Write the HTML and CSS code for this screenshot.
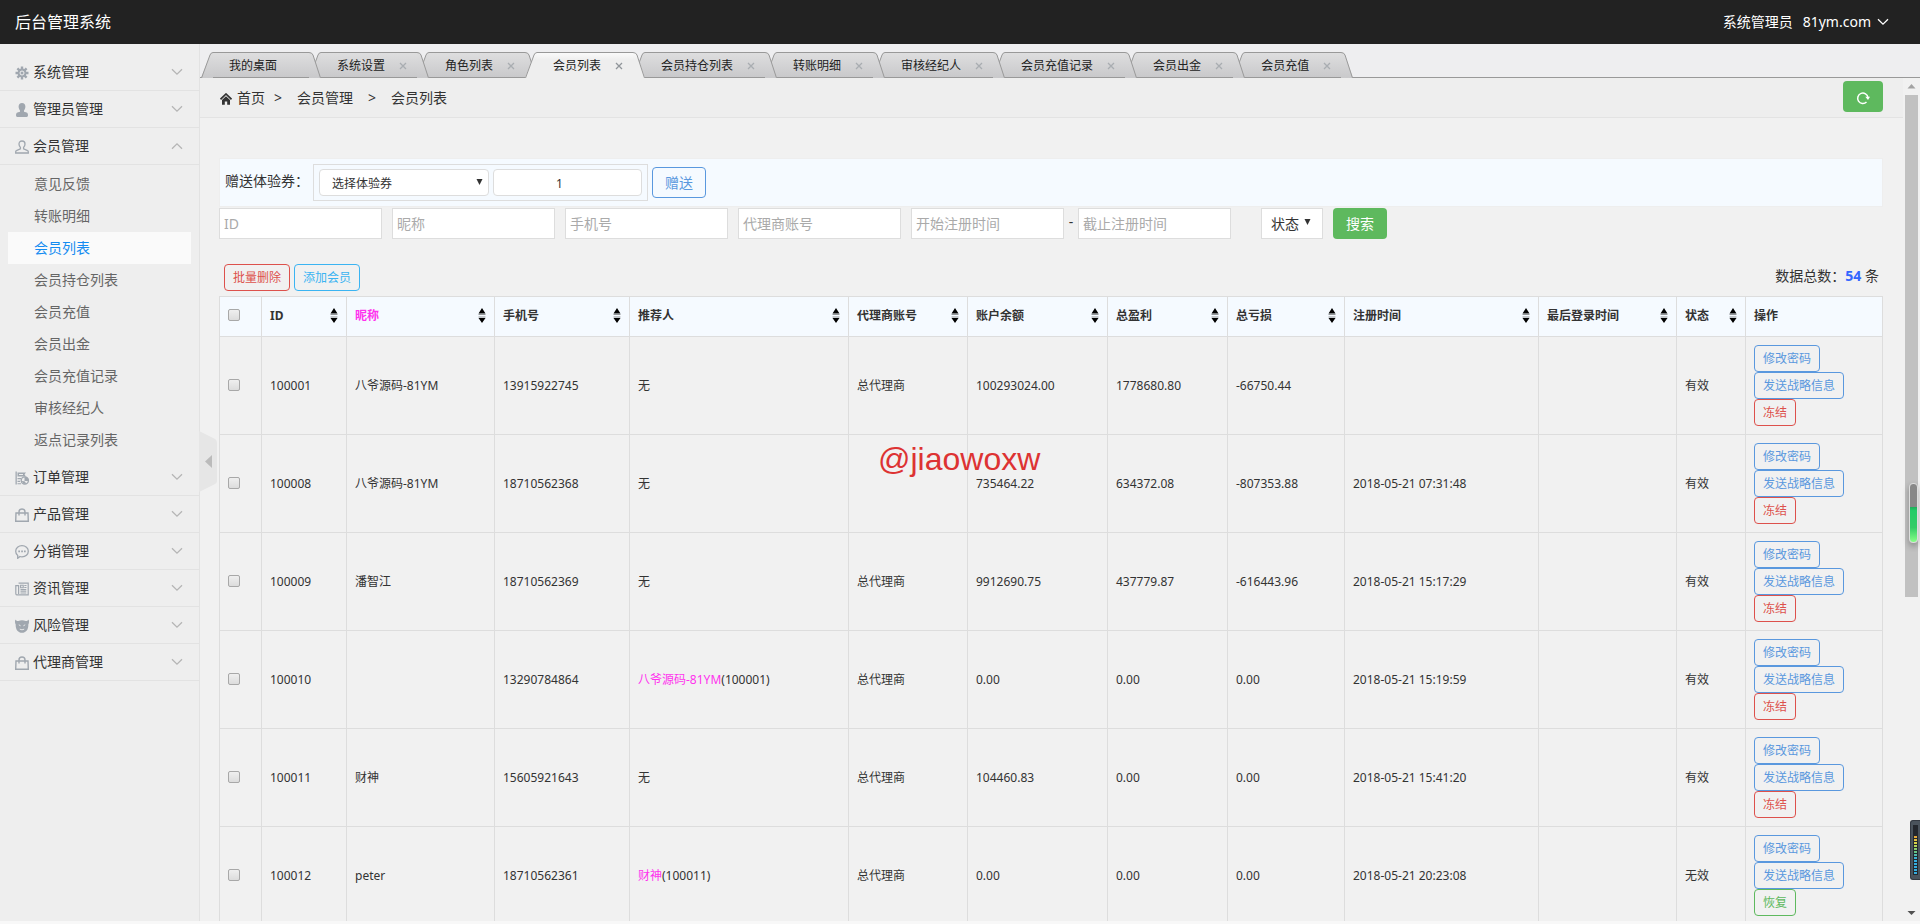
FILE: index.html
```html
<!DOCTYPE html>
<html lang="zh-CN">
<head>
<meta charset="utf-8">
<title>后台管理系统</title>
<link rel="stylesheet" href="styles.css">
</head>
<body>
<svg class="defs" aria-hidden="true">
  <defs>
    <linearGradient id="tab-fill" x1="0" y1="0" x2="0" y2="1"><stop offset="0" stop-color="#dededf"/><stop offset="1" stop-color="#c9c9cb"/></linearGradient>
    <linearGradient id="tab-fill-on" x1="0" y1="0" x2="0" y2="1"><stop offset="0" stop-color="#fafafa"/><stop offset=".3" stop-color="#eeeeee"/><stop offset="1" stop-color="#eeeeee"/></linearGradient>
  </defs>
  <symbol id="cap-l" viewBox="0 0 12 26"><path class="cap-fill" d="M0 26 9 3Q10 0 12 0V26Z"/><path class="cap-line" d="M.5 26 9 3Q10 .5 12 .5"/></symbol>
  <symbol id="cap-r" viewBox="0 0 12 26"><path class="cap-fill" d="M12 26 4 3Q3 0 0 0V26Z"/><path class="cap-line" d="M11.5 26 4 3Q3 .5 0 .5"/></symbol>
  <symbol id="i-x" viewBox="0 0 8 8"><path d="M1 1 7 7M7 1 1 7" fill="none" stroke="currentColor" stroke-width="1.3"/></symbol>
  <symbol id="i-down" viewBox="0 0 12 8"><path d="M1 1.2 6 6.2 11 1.2" fill="none" stroke="currentColor" stroke-width="1.3"/></symbol>
  <symbol id="i-sort" viewBox="0 0 8 16"><path d="M4 0 7.5 5.500H.5ZM4 15 7.500 10H.5Z"/><path d="M.5 6h7v1H.5zM.5 8.500h7v1H.5z" opacity=".4"/></symbol>
  <symbol id="i-tri" viewBox="0 0 6 6"><path d="M0 0H6L3 6Z"/></symbol>
  <symbol id="i-gear" viewBox="0 0 14 14"><g stroke="currentColor" stroke-width="2.4"><path d="M7 .5v13M.5 7h13M2.4 2.4l9.2 9.2M11.6 2.4 2.4 11.6"/></g><circle cx="7" cy="7" r="4.4" fill="currentColor"/><circle cx="7" cy="7" r="2" fill="none" stroke="#eee"/></symbol>
  <symbol id="i-user" viewBox="0 0 14 14"><path fill="currentColor" d="M7 0c2.200 0 3.400 1.500 3.400 3.600 0 1.900-.7 3-1.400 4v1.100c3 .6 4 1.200 4 3.300 0 1-.4 2-1.400 2H2.400C1.400 14 1 13 1 12c0-2.100 1-2.700 4-3.300V7.600c-.7-1-1.400-2.100-1.400-4C3.600 1.500 4.800 0 7 0Z"/></symbol>
  <symbol id="i-user-o" viewBox="0 0 14 14"><path fill="none" stroke="currentColor" stroke-width="1.3" d="M7 1c2 0 3 1.200 3 3 0 1.500-.7 2.600-1.400 3.400v1.400l4 1.800c.5.200.7.700.7 1.200V13H.7v-1.200c0-.5.2-1 .7-1.200l4-1.800V7.400C4.700 6.600 4 5.500 4 4c0-1.800 1-3 3-3Z"/></symbol>
  <symbol id="i-order" viewBox="0 0 14 14"><path fill="currentColor" d="M.5.500h1.300v13H.5zM2.500 1.500H11l-1.500 2 1.500 2H2.500zM2.500 7H6v1.300H2.500zM2.500 9.800H5V11H2.500zM2.500 12.200H6v1H2.500z"/><path d="M4 3.500h4" stroke="#eee"/><circle cx="9.800" cy="9.500" r="3.600" fill="none" stroke="currentColor" stroke-width="1.300"/><path fill="currentColor" d="M9.500 6v4h4V8L12 6.200ZM6.500 10l3 .3 2 2.500H8.500Z"/></symbol>
  <symbol id="i-bag" viewBox="0 0 14 14"><path fill="none" stroke="currentColor" stroke-width="1.400" d="M1 5h12l.3 8.300H.7ZM4 7.500V4a3 3 0 0 1 6 0v3.500"/></symbol>
  <symbol id="i-chat" viewBox="0 0 14 14"><path fill="none" stroke="currentColor" stroke-width="1.300" d="M7 .7c3.500 0 6.300 2.400 6.300 5.500S10.500 11.800 7 11.800c-.7 0-1.400-.1-2-.3L2.700 13.300v-2.900C1.400 9.400.7 7.900.7 6.200.7 3.100 3.500.7 7 .7Z"/><path fill="currentColor" d="M3.300 5.500H5v1.700H3.300zM6.200 5.500h1.700v1.700H6.200zM9 5.500h1.700v1.700H9z"/></symbol>
  <symbol id="i-news" viewBox="0 0 14 14"><path fill="none" stroke="currentColor" stroke-width="1.200" d="M3.600 1.100h9.600v11.800H1.800Q.8 12.900.8 11.500V3.600h2.800V12M5.500 7.500h5.800M5.500 9.200h5.800M5.500 11h5.800"/><path fill="none" stroke="currentColor" stroke-width="1.100" d="M5.600 3.200h2.600v2.500H5.600zM9.300 3.500h2.200M9.300 5.500h2.200"/></symbol>
  <symbol id="i-devil" viewBox="0 0 14 14"><path fill="currentColor" d="M.3.500C1.200 1.700 2.300 2.200 3.400 1.900c2.200-.8 5-.8 7.200 0 1.100.3 2.200-.2 3.100-1.400.6 2.300.3 3.800-.4 5C13.600 10.500 11 13.800 7 13.800S.4 10.500.7 5.500C0 4.300-.3 2.800.3.500Z"/><path d="m3.800 5.800 1.800 1M10.200 5.800l-1.800 1M4.800 10.200q2.200 1.200 4.400 0" fill="none" stroke="#eee" stroke-width=".9"/></symbol>
  <symbol id="i-home" viewBox="0 0 12 12"><path d="M.5 6.300 6 1l5.500 5.300" fill="none" stroke="currentColor" stroke-width="1.700"/><path fill="currentColor" d="M2 7 6 3.200 10 7v4.800H7.200V8.500H4.800v3.300H2Z"/></symbol>
  <symbol id="i-reload" viewBox="0 0 14 14"><path d="M10.500 11A5.200 5.200 0 1 1 12 6.500" fill="none" stroke="currentColor" stroke-width="1.500"/><path d="M9.300 5.800h4.700L12 9Z" fill="currentColor"/></symbol>
</svg>

<header class="topbar">
  <a class="brand" href="#">后台管理系统</a>
  <div class="account"><span>系统管理员</span><button class="account-btn" type="button">81ym.com <svg class="chev"><use href="#i-down"/></svg></button></div>
</header>

<div class="shell">
  <aside class="side">
    <nav>
      <button type="button" class="group"><svg class="ico"><use href="#i-gear"/></svg>系统管理<svg class="chev"><use href="#i-down"/></svg></button>
      <button type="button" class="group"><svg class="ico"><use href="#i-user"/></svg>管理员管理<svg class="chev"><use href="#i-down"/></svg></button>
      <button type="button" class="group open"><svg class="ico"><use href="#i-user-o"/></svg>会员管理<svg class="chev"><use href="#i-down"/></svg></button>
      <div class="sub">
        <a href="#">意见反馈</a>
        <a href="#">转账明细</a>
        <a href="#" class="on">会员列表</a>
        <a href="#">会员持仓列表</a>
        <a href="#">会员充值</a>
        <a href="#">会员出金</a>
        <a href="#">会员充值记录</a>
        <a href="#">审核经纪人</a>
        <a href="#">返点记录列表</a>
      </div>
      <button type="button" class="group"><svg class="ico"><use href="#i-order"/></svg>订单管理<svg class="chev"><use href="#i-down"/></svg></button>
      <button type="button" class="group"><svg class="ico"><use href="#i-bag"/></svg>产品管理<svg class="chev"><use href="#i-down"/></svg></button>
      <button type="button" class="group"><svg class="ico"><use href="#i-chat"/></svg>分销管理<svg class="chev"><use href="#i-down"/></svg></button>
      <button type="button" class="group"><svg class="ico"><use href="#i-news"/></svg>资讯管理<svg class="chev"><use href="#i-down"/></svg></button>
      <button type="button" class="group"><svg class="ico"><use href="#i-devil"/></svg>风险管理<svg class="chev"><use href="#i-down"/></svg></button>
      <button type="button" class="group"><svg class="ico"><use href="#i-bag"/></svg>代理商管理<svg class="chev"><use href="#i-down"/></svg></button>
    </nav>
    <button type="button" class="collapse" aria-label="收起菜单"><svg viewBox="0 0 18 62"><path fill="#e6e6e6" d="M0 0 16 8Q18 9 18 12V50Q18 52 16 53L0 61Z"/><path fill="#bbb" d="M13 24v13L6 30.500Z"/></svg></button>
  </aside>

  <main class="main">
    <ul class="tabs">
      <li class="tab"><svg class="cap"><use href="#cap-l"/></svg><span class="tab-body">我的桌面</span><svg class="cap"><use href="#cap-r"/></svg></li>
      <li class="tab"><svg class="cap"><use href="#cap-l"/></svg><span class="tab-body">系统设置<svg class="x"><use href="#i-x"/></svg></span><svg class="cap"><use href="#cap-r"/></svg></li>
      <li class="tab"><svg class="cap"><use href="#cap-l"/></svg><span class="tab-body">角色列表<svg class="x"><use href="#i-x"/></svg></span><svg class="cap"><use href="#cap-r"/></svg></li>
      <li class="tab active"><svg class="cap"><use href="#cap-l"/></svg><span class="tab-body">会员列表<svg class="x"><use href="#i-x"/></svg></span><svg class="cap"><use href="#cap-r"/></svg></li>
      <li class="tab"><svg class="cap"><use href="#cap-l"/></svg><span class="tab-body">会员持仓列表<svg class="x"><use href="#i-x"/></svg></span><svg class="cap"><use href="#cap-r"/></svg></li>
      <li class="tab"><svg class="cap"><use href="#cap-l"/></svg><span class="tab-body">转账明细<svg class="x"><use href="#i-x"/></svg></span><svg class="cap"><use href="#cap-r"/></svg></li>
      <li class="tab"><svg class="cap"><use href="#cap-l"/></svg><span class="tab-body">审核经纪人<svg class="x"><use href="#i-x"/></svg></span><svg class="cap"><use href="#cap-r"/></svg></li>
      <li class="tab"><svg class="cap"><use href="#cap-l"/></svg><span class="tab-body">会员充值记录<svg class="x"><use href="#i-x"/></svg></span><svg class="cap"><use href="#cap-r"/></svg></li>
      <li class="tab"><svg class="cap"><use href="#cap-l"/></svg><span class="tab-body">会员出金<svg class="x"><use href="#i-x"/></svg></span><svg class="cap"><use href="#cap-r"/></svg></li>
      <li class="tab"><svg class="cap"><use href="#cap-l"/></svg><span class="tab-body">会员充值<svg class="x"><use href="#i-x"/></svg></span><svg class="cap"><use href="#cap-r"/></svg></li>
    </ul>

    <div class="frame">
      <div class="page">
        <nav class="crumbs">
          <svg class="home"><use href="#i-home"/></svg><a href="#">首页</a><span class="gt first">&gt;</span><span>会员管理</span><span class="gt">&gt;</span><span>会员列表</span>
          <button type="button" class="reload" aria-label="刷新"><svg><use href="#i-reload"/></svg></button>
        </nav>

        <div class="content">
          <form class="voucher">
            <label for="coupon">赠送体验券：</label>
            <div class="voucher-box">
              <div class="pick wide"><select id="coupon"><option>选择体验券</option></select><svg class="arrow"><use href="#i-tri"/></svg></div>
              <input class="count" type="text" value="1" aria-label="数量">
            </div>
            <button type="button" class="btn-line">赠送</button>
          </form>

          <form class="search">
            <input type="text" class="field" placeholder="ID" aria-label="ID">
            <input type="text" class="field" placeholder="昵称" aria-label="昵称">
            <input type="text" class="field" placeholder="手机号" aria-label="手机号">
            <input type="text" class="field" placeholder="代理商账号" aria-label="代理商账号">
            <div class="range"><input type="text" class="field date" placeholder="开始注册时间" aria-label="开始注册时间"><span>-</span><input type="text" class="field date" placeholder="截止注册时间" aria-label="截止注册时间"></div>
            <div class="pick status"><select aria-label="状态"><option>状态</option></select><svg class="arrow"><use href="#i-tri"/></svg></div>
            <button type="button" class="btn-go">搜索</button>
          </form>

          <div class="tools">
            <button type="button" class="mini red">批量删除</button>
            <button type="button" class="mini cyan">添加会员</button>
            <span class="total">数据总数：<strong>54</strong> 条</span>
          </div>

          <table class="list">
            <colgroup><col class="w-check"><col class="w-id"><col class="w-nick"><col class="w-phone"><col class="w-ref"><col class="w-agent"><col class="w-bal"><col class="w-win"><col class="w-loss"><col class="w-reg"><col class="w-last"><col class="w-state"><col class="w-op"></colgroup>
            <thead>
              <tr>
                <th><input type="checkbox" aria-label="全选"></th>
                <th><div class="th">ID<svg class="sort"><use href="#i-sort"/></svg></div></th>
                <th><div class="th pink">昵称<svg class="sort"><use href="#i-sort"/></svg></div></th>
                <th><div class="th">手机号<svg class="sort"><use href="#i-sort"/></svg></div></th>
                <th><div class="th">推荐人<svg class="sort"><use href="#i-sort"/></svg></div></th>
                <th><div class="th">代理商账号<svg class="sort"><use href="#i-sort"/></svg></div></th>
                <th><div class="th">账户余额<svg class="sort"><use href="#i-sort"/></svg></div></th>
                <th><div class="th">总盈利<svg class="sort"><use href="#i-sort"/></svg></div></th>
                <th><div class="th">总亏损<svg class="sort"><use href="#i-sort"/></svg></div></th>
                <th><div class="th">注册时间<svg class="sort"><use href="#i-sort"/></svg></div></th>
                <th><div class="th">最后登录时间<svg class="sort"><use href="#i-sort"/></svg></div></th>
                <th><div class="th">状态<svg class="sort"><use href="#i-sort"/></svg></div></th>
                <th>操作</th>
              </tr>
            </thead>
            <tbody>
              <tr><td><input type="checkbox" aria-label="100001"></td><td>100001</td><td>八爷源码-81YM</td><td>13915922745</td><td>无</td><td>总代理商</td><td>100293024.00</td><td>1778680.80</td><td>-66750.44</td><td></td><td></td><td>有效</td><td><div class="ops"><button type="button" class="mini blue">修改密码</button><button type="button" class="mini blue">发送战略信息</button><button type="button" class="mini red">冻结</button></div></td></tr>
              <tr><td><input type="checkbox" aria-label="100008"></td><td>100008</td><td>八爷源码-81YM</td><td>18710562368</td><td>无</td><td></td><td>735464.22</td><td>634372.08</td><td>-807353.88</td><td>2018-05-21 07:31:48</td><td></td><td>有效</td><td><div class="ops"><button type="button" class="mini blue">修改密码</button><button type="button" class="mini blue">发送战略信息</button><button type="button" class="mini red">冻结</button></div></td></tr>
              <tr><td><input type="checkbox" aria-label="100009"></td><td>100009</td><td>潘智江</td><td>18710562369</td><td>无</td><td>总代理商</td><td>9912690.75</td><td>437779.87</td><td>-616443.96</td><td>2018-05-21 15:17:29</td><td></td><td>有效</td><td><div class="ops"><button type="button" class="mini blue">修改密码</button><button type="button" class="mini blue">发送战略信息</button><button type="button" class="mini red">冻结</button></div></td></tr>
              <tr><td><input type="checkbox" aria-label="100010"></td><td>100010</td><td></td><td>13290784864</td><td><a href="#" class="pink">八爷源码-81YM</a>(100001)</td><td>总代理商</td><td>0.00</td><td>0.00</td><td>0.00</td><td>2018-05-21 15:19:59</td><td></td><td>有效</td><td><div class="ops"><button type="button" class="mini blue">修改密码</button><button type="button" class="mini blue">发送战略信息</button><button type="button" class="mini red">冻结</button></div></td></tr>
              <tr><td><input type="checkbox" aria-label="100011"></td><td>100011</td><td>财神</td><td>15605921643</td><td>无</td><td>总代理商</td><td>104460.83</td><td>0.00</td><td>0.00</td><td>2018-05-21 15:41:20</td><td></td><td>有效</td><td><div class="ops"><button type="button" class="mini blue">修改密码</button><button type="button" class="mini blue">发送战略信息</button><button type="button" class="mini red">冻结</button></div></td></tr>
              <tr><td><input type="checkbox" aria-label="100012"></td><td>100012</td><td>peter</td><td>18710562361</td><td><a href="#" class="pink">财神</a>(100011)</td><td>总代理商</td><td>0.00</td><td>0.00</td><td>0.00</td><td>2018-05-21 20:23:08</td><td></td><td>无效</td><td><div class="ops"><button type="button" class="mini blue">修改密码</button><button type="button" class="mini blue">发送战略信息</button><button type="button" class="mini green">恢复</button></div></td></tr>
            </tbody>
          </table>
        </div>
      </div>
      <div class="scroll" aria-hidden="true">
        <svg class="scroll-arrow" viewBox="0 0 17 17"><path fill="#a3a3a3" d="M8.500 6 12.500 10.500H4.500Z"/></svg>
        <div class="track"><div class="thumb"></div></div>
        <svg class="scroll-arrow" viewBox="0 0 17 17"><path fill="#505050" d="M8.500 11 12.500 7H4.500Z"/></svg>
      </div>
    </div>
  </main>
</div>

<div class="stamp">@jiaowoxw</div>
<div class="pill" aria-hidden="true"></div>
<div class="meter" aria-hidden="true"><div class="meter-bars"></div></div>
</body>
</html>
```
FILE: styles.css
```css
* { box-sizing: border-box; }

body {
  margin: 0;
  height: 100vh;
  display: flex;
  flex-direction: column;
  overflow: hidden;
  padding-bottom: 3px;
  background: #f8f8f8;
  color: #333;
  font: 14px/20px "Noto Sans", "Noto Sans CJK SC", sans-serif;
}

button, input, select { font: inherit; color: inherit; margin: 0; }
button { cursor: pointer; background: none; border: 0; padding: 0; }
a { color: inherit; text-decoration: none; }
svg { display: block; flex: none; fill: currentColor; }
.defs { position: absolute; width: 0; height: 0; }

/* Top bar */
.topbar {
  flex: none;
  height: 44px;
  display: flex;
  align-items: center;
  justify-content: space-between;
  padding: 0 31px 0 15px;
  background: #222;
  color: #fff;
}
.brand { font-size: 16px; }
.account { display: flex; gap: 10px; }
.account-btn { display: flex; align-items: center; gap: 6px; }
.chev { width: 12px; height: 8px; }

.shell { flex: 1; min-height: 0; display: flex; }

/* Side menu */
.side {
  position: relative;
  z-index: 2;
  flex: none;
  width: 200px;
  padding-top: 10px;
  background: #eee;
  border-right: 1px solid #e2e2e2;
}
.group {
  width: 100%;
  height: 37px;
  display: flex;
  align-items: center;
  padding: 0 16px 0 15px;
  border-bottom: 1px solid #e2e2e2;
  text-align: left;
}
.ico { width: 14px; height: 14px; margin: 2px 4px 0 0; color: #a0a7af; }
.group .chev { margin-left: auto; color: #b5b5b5; }
.group.open .chev { transform: rotate(180deg); }
.sub { padding: 3px 8px; }
.sub a {
  display: block;
  height: 32px;
  line-height: 32px;
  padding-left: 26px;
  color: #666;
}
.sub a.on { background: #fafafa; color: #148cf1; }
.collapse {
  position: absolute;
  left: 100%;
  top: 387px;
  width: 18px;
  height: 62px;
}

/* Tabs */
.main { flex: 1; min-width: 0; display: flex; flex-direction: column; }
.tabs {
  position: relative;
  flex: none;
  height: 34px;
  margin: 0;
  padding: 8px 0 0 1px;
  display: flex;
  list-style: none;
  background: #eeeef0;
  border-bottom: 1px solid #999;
  font-size: 12px;
  color: #222;
}
.tab { position: relative; display: flex; height: 26px; margin-right: -12px; }
.tab:nth-child(1) { z-index: 9; }
.tab:nth-child(2) { z-index: 8; }
.tab:nth-child(3) { z-index: 7; }
.tab:nth-child(4) { z-index: 10; }
.tab:nth-child(5) { z-index: 6; }
.tab:nth-child(6) { z-index: 5; }
.tab:nth-child(7) { z-index: 4; }
.tab:nth-child(8) { z-index: 3; }
.tab:nth-child(9) { z-index: 2; }
.tab:nth-child(10) { z-index: 1; }
.tab .cap { width: 12px; height: 26px; }
.cap-fill { fill: var(--cap, url(#tab-fill)); }
.cap-line { fill: none; stroke: #999; }
.tab-body {
  min-width: 96px;
  display: flex;
  align-items: center;
  gap: 14px;
  padding: 2px 14px 0 16px;
  border-top: 1px solid #999;
  border-bottom: 1px solid #999;
  background: linear-gradient(#dededf, #c9c9cb);
}
.tab .x { width: 8px; height: 8px; margin-right: -4px; color: #a9adb1; }
.tab.active { --cap: url(#tab-fill-on); }
.tab.active .tab-body { background: linear-gradient(#fafafa, #eee 30%); border-bottom-color: #eee; }
.tab.active .x { color: #90959a; }

/* Page frame */
.frame { flex: 1; min-height: 0; display: flex; background: #f1f1f1; }
.page { flex: 1; min-width: 0; overflow: hidden; }
.crumbs {
  height: 40px;
  display: flex;
  align-items: center;
  padding: 0 20px;
  background: #eee;
  border-bottom: 1px solid #e3e3e3;
}
.home { width: 12px; height: 12px; margin: 3px 5px 0 0; }
.gt { margin: 0 15px; }
.gt.first { margin-left: 9px; }
.reload {
  width: 40px;
  height: 31px;
  margin: 0 0 2px auto;
  display: flex;
  align-items: center;
  justify-content: center;
  border-radius: 4px;
  background: #5eb95e;
  color: #fff;
}
.reload svg { width: 14px; height: 14px; margin-top: 3px; }
.content { padding: 40px 20px 0 19px; }

/* Voucher row */
.voucher {
  height: 49px;
  display: flex;
  align-items: center;
  padding-left: 5px;
  background: #f5faff;
  border: 1px solid #eee;
}
.voucher label { width: 88px; padding-bottom: 4px; }
.voucher-box {
  display: flex;
  gap: 4px;
  padding: 4px 5px;
  margin-right: 4px;
  border: 1px solid #ddd;
}
.pick { position: relative; }
.pick select {
  width: 100%;
  height: 100%;
  appearance: none;
  background: #fff;
  border: 1px solid #ddd;
}
.arrow { position: absolute; right: 6px; top: 10px; width: 7px; height: 6px; pointer-events: none; }
.pick.wide { width: 170px; height: 27px; font-size: 12px; }
.pick.wide select { padding: 2px 12px 0; border-radius: 4px; }
.count {
  width: 149px;
  height: 27px;
  padding: 2px 16px 0 0;
  border: 1px solid #ddd;
  border-radius: 4px;
  background: #fff;
  font-size: 12px;
  text-align: center;
}
.btn-line {
  width: 54px;
  height: 31px;
  border: 1px solid #5a98de;
  border-radius: 4px;
  color: #5a98de;
}

/* Search row */
.search { display: flex; gap: 10px; padding-top: 1px; }
.field {
  width: 163px;
  height: 31px;
  padding: 0 4px;
  border: 1px solid #ddd;
  background: #fff;
}
.field::placeholder { color: #aaa; opacity: 1; }
.field.date { width: 153px; }
.range { display: flex; margin-right: 20px; }
.range span { width: 14px; text-align: center; line-height: 28px; }
.pick.status { width: 62px; }
.pick.status select { padding: 0 9px; }
.pick.status .arrow { right: 12px; top: 11px; }
.btn-go { width: 54px; height: 31px; border-radius: 4px; background: #5eb95e; color: #fff; }

/* Table tools */
.tools { display: flex; gap: 4px; align-items: center; padding: 25px 4px 5px 5px; }
.mini {
  height: 27px;
  padding: 0 8px;
  border: 1px solid;
  border-radius: 4px;
  font-size: 12px;
  line-height: 25px;
}
.red { color: #dd514c; }
.cyan { color: #3bb4f2; }
.blue { color: #5a98de; }
.green { color: #5eb95e; }
.pink { color: #f3e; }
.total { margin-left: auto; padding-bottom: 4px; }
.total strong { color: #36f; }

/* Member table */
.list {
  width: 100%;
  table-layout: fixed;
  border-collapse: collapse;
  font-size: 12px;
}
.list th, .list td { border: 1px solid #ddd; padding: 8px; text-align: left; }
.list th { height: 40px; padding: 0 8px 2px; background: #f5faff; font-weight: 700; }
.th { display: flex; align-items: center; justify-content: space-between; }
.sort { width: 8px; height: 16px; color: #000; }
.ops { display: flex; flex-direction: column; align-items: flex-start; }
.list input {
  display: block;
  appearance: none;
  width: 12px;
  height: 12px;
  margin-bottom: 2px;
  border: 1px solid #a8a8a8;
  border-radius: 2px;
  background: linear-gradient(#efefef, #dcdcdc);
}
.w-check { width: 42px; }
.w-id { width: 85px; }
.w-nick { width: 148px; }
.w-phone { width: 135px; }
.w-ref { width: 219px; }
.w-agent { width: 119px; }
.w-bal { width: 140px; }
.w-win { width: 120px; }
.w-loss { width: 117px; }
.w-reg { width: 194px; }
.w-last { width: 138px; }
.w-state { width: 69px; }
.w-op { width: 137px; }

/* Scroll bar */
.scroll { flex: none; width: 17px; display: flex; flex-direction: column; background: #f1f1f1; }
.scroll-arrow { width: 17px; height: 17px; }
.track { flex: 1; padding: 0 2px; }
.thumb { height: 62%; background: #c1c1c1; }

/* Desktop overlays */
.stamp {
  position: absolute;
  left: 878px;
  top: 439px;
  color: #d33;
  font: 32px/40px "Liberation Sans", sans-serif;
}
.pill {
  position: absolute;
  right: 2px;
  top: 483px;
  width: 9px;
  height: 60px;
  border: 1px solid #ddd;
  border-radius: 4px;
  background: linear-gradient(#888 0 40%, #1fae5b 40%, #2c6 46%, #3c6 75%, #8f8);
  box-shadow: 0 3px 6px rgba(0, 0, 0, .3);
}
.meter {
  position: absolute;
  right: 0;
  top: 820px;
  width: 10px;
  height: 60px;
  padding: 4px 2px 4px 2px;
  border: 1px solid #333941;
  border-right: 0;
  border-radius: 3px 0 0 3px;
  background: #4a535c;
}
.meter-bars {
  height: 100%;
  border: 1px solid #23272d;
  border-top-width: 11px;
  background:
    repeating-linear-gradient(transparent 0 2px, #23272d 2px 3px),
    linear-gradient(#e8a33a, #d8d84a 20%, #6cc87c 40%, #35aee0 60%);
}
```
